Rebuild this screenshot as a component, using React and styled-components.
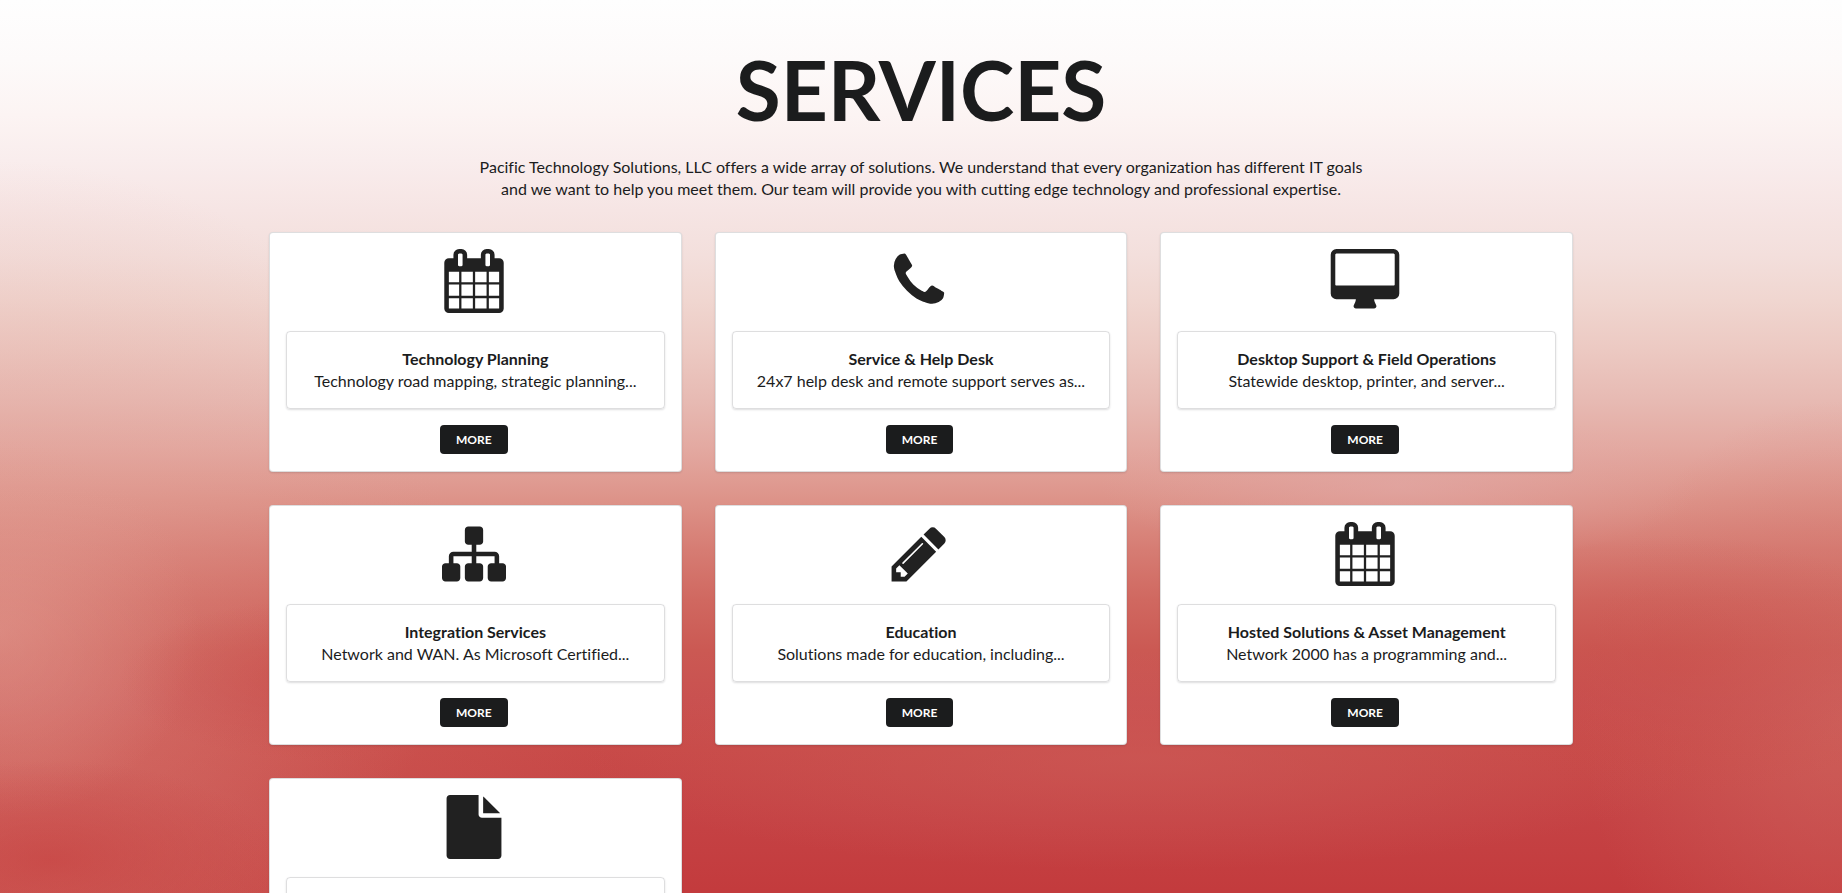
import React from 'react';
import styled, { createGlobalStyle } from 'styled-components';

const GlobalStyle = createGlobalStyle`
  *, *::before, *::after { box-sizing: border-box; }
  body {
    margin: 0;
    font-family: Lato, 'Helvetica Neue', Arial, sans-serif;
    font-size: 16px;
    line-height: 22px;
    font-variant-ligatures: none;
    color: #1b1c1d;
  }
`;

const Section = styled.section`
  min-height: 100vh;
  padding: 46px 32px 32px;
  background:
    radial-gradient(ellipse 230px 100px at 50px 860px, rgba(198, 62, 62, 0.6), transparent),
    radial-gradient(ellipse 190px 80px at 310px 680px, rgba(200, 74, 70, 0.5), transparent),
    radial-gradient(ellipse 200px 190px at 0 630px, rgba(226, 156, 146, 0.5), transparent),
    radial-gradient(ellipse 460px 420px at 0 580px, rgba(226, 160, 150, 0.4), transparent),
    radial-gradient(ellipse 600px 320px at 60px 880px, rgba(210, 106, 96, 0.6), transparent),
    radial-gradient(ellipse 300px 80px at 76% 486px, rgba(226, 172, 170, 0.55), transparent),
    radial-gradient(ellipse 260px 130px at 91% 665px, rgba(200, 70, 68, 0.35), transparent),
    radial-gradient(ellipse 260px 320px at 100% 720px, rgba(210, 112, 104, 0.5), transparent),
    radial-gradient(ellipse 560px 110px at 62% 760px, rgba(206, 96, 92, 0.5), transparent),
    linear-gradient(
      180deg,
      #fefefe 0,
      #fdfafa 60px,
      #fcf4f3 115px,
      #f9eded 160px,
      #f6e5e4 210px,
      #f3dfdc 255px,
      #f0d6d0 300px,
      #ecc9c2 350px,
      #e7bab3 400px,
      #e3a8a0 450px,
      #dd9389 500px,
      #d67c73 550px,
      #d06860 600px,
      #cb5953 650px,
      #c95150 700px,
      #c84a48 750px,
      #c54244 820px,
      #c33b3d 890px
    );
`;

const Header = styled.header`
  text-align: center;
`;

const Title = styled.h1`
  margin: 0;
  font-size: 82px;
  line-height: 86px;
  font-weight: 700;
`;

const Intro = styled.p`
  max-width: 910px;
  margin: 24px auto 32px;
`;

const Grid = styled.div`
  display: grid;
  grid-template-columns: repeat(auto-fit, minmax(320px, 1fr));
  gap: 33px;
  max-width: 1304px;
  margin: 0 auto;
`;

const Card = styled.article`
  display: flex;
  flex-direction: column;
  align-items: center;
  padding: 16px 16px 17px;
  background: #ffffff;
  border: 1px solid rgba(34, 36, 38, 0.15);
  border-radius: 4px;
  box-shadow: 0 1px 2px rgba(34, 36, 38, 0.15);
`;

const Icon = styled.svg`
  width: 64px;
  height: 64px;
  margin-right: 3px;
  overflow: visible;
  fill: #212121;
`;

const Summary = styled.div`
  width: 100%;
  margin: 18px 0 16px;
  padding: 16px;
  text-align: center;
  border: 1px solid rgba(34, 36, 38, 0.15);
  border-radius: 4px;
  box-shadow: 0 1px 2px rgba(34, 36, 38, 0.15);
`;

const CardTitle = styled.h2`
  margin: 0;
  font-size: 16px;
  line-height: 22px;
  font-weight: 700;
`;

const CardText = styled.p`
  margin: 0;
`;

const MoreButton = styled.button`
  height: 29px;
  margin-right: 3px;
  padding: 0 16px;
  border: 0;
  border-radius: 4px;
  background: #1b1c1d;
  color: #ffffff;
  font: 700 12px/12px Lato, Arial, sans-serif;
  cursor: pointer;
`;

const icons = {
  calendar:
    'M192 1664h288v-288h-288v288zm352 0h320v-288h-320v288zm-352-352h288v-320h-288v320zm352 0h320v-320h-320v320zm-352-384h288v-288h-288v288zm736 736h320v-288h-320v288zm-384-736h320v-288h-320v288zm768 736h288v-288h-288v288zm-384-352h320v-320h-320v320zm-352-864v-288q0-13-9.5-22.5t-22.5-9.5h-64q-13 0-22.5 9.5t-9.5 22.5v288q0 13 9.5 22.5t22.5 9.5h64q13 0 22.5-9.5t9.5-22.5zm736 864h288v-320h-288v320zm-384-384h320v-288h-320v288zm384 0h288v-288h-288v288zm32-480v-288q0-13-9.5-22.5t-22.5-9.5h-64q-13 0-22.5 9.5t-9.5 22.5v288q0 13 9.5 22.5t22.5 9.5h64q13 0 22.5-9.5t9.5-22.5zm384-64v1280q0 52-38 90t-90 38h-1408q-52 0-90-38t-38-90v-1280q0-52 38-90t90-38h128v-96q0-66 47-113t113-47h64q66 0 113 47t47 113v96h384v-96q0-66 47-113t113-47h64q66 0 113 47t47 113v96h128q52 0 90 38t38 90z',
  phone:
    'M1600 1240q0 27-10 70.5t-21 68.5q-21 50-122 106-94 51-186 51-27 0-53-3.5t-57.5-12.5-47-14.5-55.5-20.5-49-18q-98-35-175-83-127-79-264-216t-216-264q-48-77-83-175-3-9-18-49t-20.5-55.5-14.5-47-12.5-57.5-3.5-53q0-92 51-186 56-101 106-122 25-11 68.5-21t70.5-10q14 0 21 3 18 6 53 76 11 19 30 54t35 63.5 31 53.5q3 4 17.5 25t21.5 35.5 7 28.5q0 20-28.5 50t-62 55-62 53-28.5 46q0 9 5 22.5t8.5 20.5 14 24 11.5 19q76 137 174 235t235 174q2 1 19 11.5t24 14 20.5 8.5 22.5 5q18 0 46-28.5t53-62 55-62 50-28.5q14 0 28.5 7t35.5 21.5 25 17.5q25 15 53.5 31t63.5 35 54 30q70 35 76 53 3 7 3 21z',
  desktop:
    'M1728 992v-832q0-13-9.5-22.5t-22.5-9.5h-1600q-13 0-22.5 9.5t-9.5 22.5v832q0 13 9.5 22.5t22.5 9.5h1600q13 0 22.5-9.5t9.5-22.5zm128-832v1088q0 66-47 113t-113 47h-544q0 37 16 77.5t32 71 16 43.5q0 26-19 45t-45 19h-512q-26 0-45-19t-19-45q0-14 16-44t32-70 16-78h-544q-66 0-113-47t-47-113v-1088q0-66 47-113t113-47h1600q66 0 113 47t47 113z',
  sitemap:
    'M1792 1248v320q0 40-28 68t-68 28h-320q-40 0-68-28t-28-68v-320q0-40 28-68t68-28h96v-192h-512v192h96q40 0 68 28t28 68v320q0 40-28 68t-68 28h-320q-40 0-68-28t-28-68v-320q0-40 28-68t68-28h96v-192h-512v192h96q40 0 68 28t28 68v320q0 40-28 68t-68 28h-320q-40 0-68-28t-28-68v-320q0-40 28-68t68-28h96v-192q0-52 38-90t90-38h512v-192h-96q-40 0-68-28t-28-68v-320q0-40 28-68t68-28h320q40 0 68 28t28 68v320q0 40-28 68t-68 28h-96v192h512q52 0 90 38t38 90v192h96q40 0 68 28t28 68z',
  pencil:
    'M491 1536l91-91-235-235-91 91v107h128v128h107zm523-928q0-22-22-22-10 0-17 7l-542 542q-7 7-7 17 0 22 22 22 10 0 17-7l542-542q7-7 7-17zm-54-192l416 416-832 832h-416v-416zm683 96q0 53-37 90l-166 166-416-416 166-165q36-38 90-38 53 0 91 38l235 234q37 39 37 91z',
  file:
    'M1152 512v-472q22 14 36 28l408 408q14 14 28 36h-472zm-128 32q0 40 28 68t68 28h544v1056q0 40-28 68t-68 28h-1344q-40 0-68-28t-28-68v-1600q0-40 28-68t68-28h800v544z',
};

const services = [
  { icon: 'calendar', title: 'Technology Planning', text: 'Technology road mapping, strategic planning...' },
  { icon: 'phone', title: 'Service & Help Desk', text: '24x7 help desk and remote support serves as...' },
  { icon: 'desktop', title: 'Desktop Support & Field Operations', text: 'Statewide desktop, printer, and server...' },
  { icon: 'sitemap', title: 'Integration Services', text: 'Network and WAN. As Microsoft Certified...' },
  { icon: 'pencil', title: 'Education', text: 'Solutions made for education, including...' },
  { icon: 'calendar', title: 'Hosted Solutions & Asset Management', text: 'Network 2000 has a programming and...' },
  { icon: 'file', title: 'Documentation', text: 'Network and system documentation...' },
];

export default function App() {
  return (
    <>
      <GlobalStyle />
      <Section>
        <Header>
          <Title>SERVICES</Title>
          <Intro>
            Pacific Technology Solutions, LLC offers a wide array of solutions. We understand that every
            organization has different IT goals and we want to help you meet them. Our team will provide you
            with cutting edge technology and professional expertise.
          </Intro>
        </Header>
        <Grid>
          {services.map((service) => (
            <Card key={service.title}>
              <Icon viewBox="0 0 1792 1792" aria-hidden="true">
                <path d={icons[service.icon]} />
              </Icon>
              <Summary>
                <CardTitle>{service.title}</CardTitle>
                <CardText>{service.text}</CardText>
              </Summary>
              <MoreButton type="button">MORE</MoreButton>
            </Card>
          ))}
        </Grid>
      </Section>
    </>
  );
}
